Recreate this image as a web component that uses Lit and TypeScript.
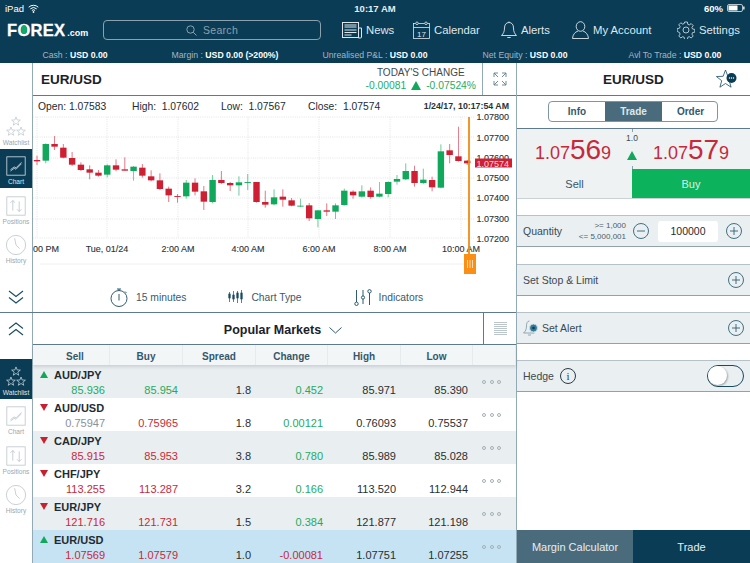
import { LitElement, html, svg, css } from 'lit'
import { customElement } from 'lit/decorators.js'
import { classMap } from 'lit/directives/class-map.js'

// candles as [high, top, bottom, low, up], y measured in 1/3 px from y=110
const CANDLES: [number, number, number, number, number][] = [
  [137, 150, 154, 165, 0], [100, 102, 152, 160, 1], [78, 102, 110, 120, 0], [102, 113, 143, 145, 0],
  [126, 144, 164, 168, 0], [157, 164, 180, 183, 0], [166, 178, 188, 208, 0], [180, 188, 197, 200, 0],
  [163, 166, 194, 202, 1], [148, 166, 179, 184, 0], [142, 178, 182, 182, 0], [168, 170, 183, 212, 1],
  [162, 173, 197, 203, 0], [181, 199, 211, 214, 0], [190, 211, 237, 240, 0], [230, 236, 256, 276, 0],
  [252, 258, 260, 278, 0], [210, 218, 259, 266, 1], [205, 218, 245, 256, 0], [228, 244, 275, 300, 0],
  [195, 210, 276, 280, 1], [183, 210, 219, 222, 0], [216, 219, 226, 243, 0], [199, 217, 226, 257, 1],
  [192, 216, 217, 240, 1], [216, 216, 276, 278, 0], [242, 276, 284, 293, 0], [238, 262, 283, 286, 1],
  [238, 260, 269, 290, 0], [264, 271, 287, 289, 0], [266, 287, 288, 291, 1], [279, 286, 325, 333, 0],
  [300, 301, 327, 352, 1], [280, 301, 305, 318, 0], [280, 286, 305, 327, 1], [236, 242, 285, 287, 1],
  [241, 245, 256, 266, 0], [226, 244, 260, 263, 1], [232, 242, 261, 266, 0], [216, 251, 260, 262, 1],
  [214, 216, 252, 262, 1], [195, 207, 215, 224, 1], [160, 183, 208, 210, 1], [167, 183, 219, 230, 0],
  [176, 209, 219, 222, 1], [200, 210, 232, 244, 0], [103, 124, 233, 235, 1], [102, 121, 135, 160, 0],
  [50, 139, 153, 155, 0], [150, 152, 160, 165, 0],
]

const GRID_Y = [117, 137, 158, 178, 198, 219, 238]
const GRID_X = [37, 107, 178, 248, 319, 390, 461]
const PRICES: [string, number][] = [
  ['1.07800', 120], ['1.07700', 140.5], ['1.07600', 160.5], ['1.07500', 180.5],
  ['1.07400', 201], ['1.07300', 221.5], ['1.07200', 241.5],
]
const TIMES: [string, number][] = [
  ['Tue, 01/24', 107], ['2:00 AM', 178], ['4:00 AM', 248], ['6:00 AM', 319], ['8:00 AM', 390], ['10:00 AM', 461],
]

interface Row {
  pair: string
  up: boolean
  sell: string
  buy: string
  tone: string
  spread: string
  change: string
  high: string
  low: string
}

const ROWS: Row[] = [
  { pair: 'AUD/JPY', up: true, sell: '85.936', buy: '85.954', tone: 'green', spread: '1.8', change: '0.452', high: '85.971', low: '85.390' },
  { pair: 'AUD/USD', up: false, sell: '0.75947', buy: '0.75965', tone: 'mixed', spread: '1.8', change: '0.00121', high: '0.76093', low: '0.75537' },
  { pair: 'CAD/JPY', up: false, sell: '85.915', buy: '85.953', tone: 'red', spread: '3.8', change: '0.780', high: '85.989', low: '85.028' },
  { pair: 'CHF/JPY', up: false, sell: '113.255', buy: '113.287', tone: 'red', spread: '3.2', change: '0.166', high: '113.520', low: '112.944' },
  { pair: 'EUR/JPY', up: false, sell: '121.716', buy: '121.731', tone: 'red', spread: '1.5', change: '0.384', high: '121.877', low: '121.198' },
  { pair: 'EUR/USD', up: true, sell: '1.07569', buy: '1.07579', tone: 'red', spread: '1.0', change: '-0.00081', high: '1.07751', low: '1.07255' },
]

const starPoints = (cx: number, cy: number, r: number) => {
  const pts: string[] = []
  for (let i = 0; i < 10; i++) {
    const rad = i % 2 ? r * 0.42 : r
    const a = (Math.PI / 5) * i - Math.PI / 2
    pts.push(`${(cx + rad * Math.cos(a)).toFixed(2)},${(cy + rad * Math.sin(a)).toFixed(2)}`)
  }
  return pts.join(' ')
}

const icons = {
  stars: html`<svg width="24" height="24" viewBox="0 0 24 24" fill="none" stroke="currentColor" stroke-width=".7">
    <polygon points=${starPoints(12, 6, 5)} /><polygon points=${starPoints(6.5, 17, 5)} /><polygon points=${starPoints(17.5, 17, 5)} />
  </svg>`,
  chart: html`<svg width="24" height="24" viewBox="0 0 24 24" fill="none" stroke="currentColor" stroke-width=".8">
    <rect x="2" y="2" width="20" height="20" /><path d="M6 16l4-3 2 1 6-6M6 17.5l4-3 2 1 6-6" />
  </svg>`,
  positions: html`<svg width="24" height="24" viewBox="0 0 24 24" fill="none" stroke="currentColor" stroke-width=".8">
    <rect x="2" y="2" width="20" height="20" /><path d="M8.5 17V6M6 8.5l2.5-2.5L11 8.5M15.5 7v11M13 15.500l2.500 2.500 2.500-2.500" />
  </svg>`,
  history: html`<svg width="24" height="24" viewBox="0 0 24 24" fill="none" stroke="currentColor" stroke-width=".8">
    <circle cx="12" cy="12" r="10.500" /><path d="M10.500 4.500l1.500 7.500 4 4" />
  </svg>`,
  down: html`<svg width="16" height="16" viewBox="0 0 16 16" fill="none" stroke="#174a63" stroke-width="1.100">
    <path d="M1 2l7 5.500L15 2M1 8.500l7 5.500 7-5.500" />
  </svg>`,
  up: html`<svg width="16" height="16" viewBox="0 0 16 16" fill="none" stroke="#174a63" stroke-width="1.100">
    <path d="M1 7.500L8 2l7 5.500M1 14l7-5.500 7 5.500" />
  </svg>`,
  wifi: html`<svg width="11" height="9" viewBox="0 0 11 9" fill="none" stroke="#fff" stroke-width="1">
    <path d="M.7 3.200a7 7 0 0 1 9.600 0M2.300 4.900a4.700 4.700 0 0 1 6.400 0M3.900 6.500a2.300 2.300 0 0 1 3.200 0" /><circle cx="5.500" cy="8" r=".6" fill="#fff" />
  </svg>`,
  battery: html`<svg width="18" height="8" viewBox="0 0 18 8">
    <rect x=".5" y=".5" width="15" height="7" rx="1.500" fill="none" stroke="#fff" stroke-width=".7" />
    <rect x="1.500" y="1.500" width="9" height="5" fill="#fff" /><rect x="16.200" y="2.500" width="1.300" height="3" fill="#fff" />
  </svg>`,
  search: html`<svg width="11" height="11" viewBox="0 0 11 11" fill="none" stroke="#8ba1ad" stroke-width="1">
    <circle cx="4.500" cy="4.500" r="3.700" /><path d="M7.200 7.200l3.300 3.300" />
  </svg>`,
  news: html`<svg width="20" height="17" viewBox="0 0 20 17" fill="none" stroke="#dfe7eb" stroke-width="1">
    <rect x=".5" y=".5" width="16" height="15" /><path d="M2.500 3h12M2.500 5h12M2.500 8h12M2.500 10.500h12M2.500 13h7M16.500 6h3v9a1 1 0 0 1-1 1h-2" />
  </svg>`,
  calendar: html`<svg width="17" height="18" viewBox="0 0 17 18" fill="none" stroke="#dfe7eb" stroke-width=".8">
    <rect x=".5" y="2.500" width="16" height="15" /><path d="M.5 6.500h16" /><circle cx="4" cy="2.300" r="1.300" fill="#0b3c55" /><circle cx="13" cy="2.300" r="1.300" fill="#0b3c55" />
    <text x="8.500" y="15.500" text-anchor="middle" font-size="8" font-family="Liberation Sans" fill="#dfe7eb" stroke="none">17</text>
  </svg>`,
  bell: html`<svg width="16" height="18" viewBox="0 0 16 18" fill="none" stroke="#dfe7eb" stroke-width=".9">
    <path d="M8 1.500c-3 0-4.500 2.400-4.500 5.500 0 3.500-1 5.500-3 7.500h15c-2-2-3-4-3-7.500 0-3.100-1.500-5.500-4.500-5.500zM6.300 16.500h3.400" />
    <path d="M8 .5v1" />
  </svg>`,
  user: html`<svg width="17" height="18" viewBox="0 0 17 18" fill="none" stroke="#dfe7eb" stroke-width=".9">
    <ellipse cx="8.500" cy="5.500" rx="4.300" ry="4.800" /><path d="M6 10C3 11 .8 13.500 .5 17.500h16C16.200 13.500 14 11 11 10" />
  </svg>`,
  gear: html`<svg width="18" height="18" viewBox="0 0 18 18" fill="none" stroke="#dfe7eb" stroke-width=".8">
    <circle cx="9" cy="9" r="3" />
    <path d="M7.600 1h2.800l.4 2.300 1.500.6 1.900-1.300 2 2-1.300 1.900.6 1.500 2.300.4v2.800l-2.300.4-.6 1.500 1.300 1.900-2 2-1.900-1.300-1.500.6-.4 2.300H7.600l-.4-2.300-1.500-.6-1.900 1.300-2-2 1.300-1.900-.6-1.500L.2 10.400V7.600l2.300-.4.6-1.500-1.300-1.900 2-2 1.900 1.300 1.500-.6z" />
  </svg>`,
  expand: html`<svg width="14" height="14" viewBox="0 0 14 14" fill="none" stroke="#5f7d8e" stroke-width=".9">
    <path d="M1 5V1h4M1 1l4 4M13 5V1H9M13 1L9 5M1 9v4h4M1 13l4-4M13 9v4H9M13 13L9 9" />
  </svg>`,
  watch: html`<svg width="18" height="19" viewBox="0 0 18 19" fill="none" stroke="#174a63" stroke-width=".9">
    <circle cx="9" cy="10.500" r="8" /><path d="M9 6v6.500M7 1h4M9 1v1.500M15 3.500l1.500 1.500" />
  </svg>`,
  bars: html`<svg width="15" height="14" viewBox="0 0 15 14" fill="#174a63" stroke="#174a63" stroke-width=".7">
    <path d="M1.500 2v10M5.500 1v11M9.500 1v12M13.500 0v13" /><rect x=".8" y="4" width="1.400" height="4" /><rect x="4.800" y="5" width="1.400" height="4" /><rect x="8.800" y="3" width="1.400" height="5" /><rect x="12.800" y="3" width="1.400" height="6" />
  </svg>`,
  sliders: html`<svg width="18" height="17" viewBox="0 0 18 17" fill="none" stroke="#174a63" stroke-width=".9">
    <path d="M2.500 1v12M9 1v6M9 10v5M15.500 4v12" /><circle cx="2.500" cy="14.800" r="1.700" /><circle cx="9" cy="8.500" r="1.600" /><circle cx="15.500" cy="2.300" r="1.700" />
  </svg>`,
  caret: html`<svg width="13" height="7" viewBox="0 0 13 7" fill="none" stroke="#174a63" stroke-width=".9"><path d="M.5 .5l6 5.500 6-5.500" /></svg>`,
  list: html`<svg width="13" height="13" viewBox="0 0 13 13" stroke="#a9b6be" stroke-width=".8"><path d="M0 .5h13M0 2.500h13M0 4.500h13M0 6.500h13M0 8.500h13M0 10.500h13M0 12.500h13" /></svg>`,
  favStar: html`<svg width="22" height="22" viewBox="0 0 22 22">
    <polygon points=${starPoints(9.500, 11.500, 9.500)} fill="#fff" stroke="#174a63" stroke-width=".8" />
    <circle cx="15.500" cy="10" r="5" fill="#0b3c55" />
    <circle cx="13.500" cy="10" r=".7" fill="#fff" /><circle cx="15.500" cy="10" r=".7" fill="#fff" /><circle cx="17.500" cy="10" r=".7" fill="#fff" />
  </svg>`,
  alert: html`<svg width="16" height="16" viewBox="0 0 16 16" fill="none" stroke="#7d96a4" stroke-width=".8">
    <path d="M6.500 1C4 1 3.500 3.500 3.500 6c0 3-1 5.500-3 7h11M5 15h3" /><circle cx="10.500" cy="8" r="4" fill="#2f7b99" stroke="#dfe7eb" /><circle cx="10.500" cy="8" r="1.300" fill="#0b3c55" stroke="none" />
  </svg>`,
}

const roundBtn = (sign: string) => html`<svg width="16" height="16" viewBox="0 0 16 16" fill="none" stroke="#2f6177" stroke-width=".9">
  <circle cx="8" cy="8" r="7.500" /><path d=${sign === '+' ? 'M4 8h8M8 4v8' : 'M4 8h8'} />
</svg>`

@customElement('app-root')
export class AppRoot extends LitElement {
  static styles = css`
    :host {
      display: block;
      width: 750px;
      height: 563px;
      overflow: hidden;
      background: #fff;
      font-family: 'Liberation Sans', Arial, sans-serif;
      color: #1d2a33;
    }
    .top {
      height: 63px;
      background: #0b3c55;
      color: #fff;
      display: grid;
      grid-template-rows: 15px 32px 16px;
    }
    .status {
      display: grid;
      grid-template-columns: 1fr auto 1fr;
      align-items: center;
      font-size: 9.500px;
      padding: 1px 5px 0 5px;
    }
    .status div { display: flex; align-items: center; gap: 4px; }
    .status .time { font-weight: 700; color: #e6edf0; }
    .status .batt { justify-content: flex-end; }
    .nav { display: flex; align-items: center; padding: 0 0 2px 7px; }
    .logo {
      width: 96px;
      font-size: 16.500px;
      font-weight: 700;
      letter-spacing: 0.300px;
      white-space: nowrap;
      -webkit-text-stroke: 0.300px #fff;
    }
    .logo small { font-size: 9px; letter-spacing: 0; margin-left: 2px; -webkit-text-stroke: 0; }
    .logo .o { position: relative; }
    .logo .o::after {
      content: '';
      position: absolute;
      left: 3.500px;
      top: 4.500px;
      width: 6px;
      height: 9px;
      border-radius: 50%;
      background: #12a86c;
    }
    .search {
      width: 218px;
      height: 20px;
      box-sizing: border-box;
      border: 1px solid #8ba1ad;
      border-radius: 4px;
      display: flex;
      align-items: center;
      justify-content: center;
      gap: 6px;
      color: #8ba1ad;
      font-size: 10.500px;
      letter-spacing: 0.300px;
    }
    .links {
      margin-left: 21px;
      display: grid;
      grid-template-columns: 71px 88px 71px 105px auto;
      font-size: 11.300px;
      color: #dfe7eb;
    }
    .links div { display: flex; align-items: center; gap: 4px; }
    .account {
      display: grid;
      grid-template-columns: repeat(5, 150px);
      font-size: 8.700px;
      line-height: 16px;
      color: #a3b6c0;
      text-align: center;
      white-space: nowrap;
    }
    .account b { color: #fff; }

    .body { display: grid; grid-template-columns: 516px 234px; height: 500px; }
    .pane { display: flex; height: 250px; box-sizing: border-box; }
    .pane.upper { height: 250px; border-bottom: 1px solid #5d7b8c; }
    .rail {
      width: 33px;
      flex: none;
      box-sizing: border-box;
      border-right: 1px solid #92a9b6;
      display: flex;
      flex-direction: column;
      color: #b4c0c7;
    }
    .rail-item {
      height: 39.500px;
      width: 32px;
      display: flex;
      flex-direction: column;
      align-items: center;
      justify-content: flex-end;
      font-size: 6.600px;
      color: #9aa8b1;
      padding-bottom: 3px;
      box-sizing: border-box;
      gap: 1px;
    }
    .rail-item svg { color: #b4c0c7; width: 22px; height: 22px; }
    .rail-item.on { background: #0b3c55; color: #dfe7eb; }
    .rail-item.on svg { color: #e6edf0; }
    .chev { display: flex; justify-content: center; width: 32px; }
    .rail.upper-rail { padding-top: 46px; }
    .rail.upper-rail .chev { margin-top: 22px; }
    .rail.lower-rail .chev { padding: 8px 0 22px; }
    .main { flex: 1; min-width: 0; display: flex; flex-direction: column; }

    .chart-head {
      height: 33px;
      box-sizing: border-box;
      border-bottom: 1px solid #5d7b8c;
      display: grid;
      grid-template-columns: 1fr auto 34px;
      align-items: center;
    }
    .pair { font-size: 13.500px; font-weight: 700; padding-left: 8px; color: #1a2229; }
    .today { text-align: center; font-size: 10px; color: #3b4a53; line-height: 13px; padding-right: 6px; }
    .today .vals {
      display: flex;
      align-items: center;
      gap: 5px;
      color: #1eab62;
      font-size: 10.300px;
    }
    .tri-up { width: 0; height: 0; border: 5.500px solid transparent; border-top: 0; border-bottom: 9px solid #12a85c; }
    .tri-down { width: 0; height: 0; border: 4px solid transparent; border-bottom: 0; border-top: 7px solid #c8202f; }
    .tri-small { border-width: 0 4px 7px; border-style: solid; border-color: transparent transparent #12a85c; }
    .expand {
      height: 100%;
      border-left: 1px solid #92a9b6;
      display: flex;
      align-items: center;
      justify-content: center;
    }
    .stats {
      height: 16px;
      padding: 5px 7px 0 5px;
      box-sizing: border-box;
      display: grid;
      grid-template-columns: 94px 89px 87px 1fr auto;
      align-items: center;
      font-size: 10.300px;
      line-height: 11px;
      color: #222c33;
      white-space: nowrap;
    }
    .stamp { font-size: 8.800px; font-weight: 700; color: #2b3339; }
    .chart { display: block; height: 163px; width: 483px; }
    .tools {
      height: 37px;
      padding-top: 7px;
      box-sizing: border-box;
      display: flex;
      align-items: center;
      font-size: 10.300px;
      color: #3b5a6c;
    }
    .tools div { display: flex; align-items: center; gap: 8px; }
    .tools div:nth-child(1) { margin-left: 77px; }
    .tools div:nth-child(2) { margin-left: 42px; }
    .tools div:nth-child(3) { margin-left: 52px; gap: 7px; }

    .market-head {
      height: 34px;
      box-sizing: border-box;
      border-bottom: 1px solid #5d7b8c;
      display: grid;
      grid-template-columns: 1fr 33px;
      align-items: center;
    }
    .market-title {
      display: flex;
      align-items: center;
      justify-content: center;
      gap: 8px;
      font-size: 12.500px;
      font-weight: 700;
      color: #1a2229;
      padding: 3px 0 0 50px;
    }
    .market-list {
      height: 100%;
      border-left: 1px solid #5d7b8c;
      display: flex;
      align-items: center;
      justify-content: center;
    }
    .cols { display: grid; grid-template-columns: 77px 73px 73px 72px 73px 72px 43px; }
    .thead {
      height: 21px;
      background: #f3f6f7;
      box-shadow: 0 2px 3px rgba(60, 80, 90, 0.18);
      position: relative;
      font-size: 10px;
      font-weight: 700;
      color: #34586b;
    }
    .thead div {
      display: flex;
      align-items: center;
      justify-content: center;
      padding-top: 2px;
      border-right: 1px solid #e6ebee;
    }
    .thead div:first-child { padding-left: 8px; }
    .row { height: 33px; grid-template-rows: 16px 17px; font-size: 11px; }
    .row:nth-child(odd) { background: #e9eef0; }
    .row.sel { background: #c5e3f2; }
    .row .name {
      grid-column: 1 / 7;
      font-weight: 700;
      display: flex;
      align-items: center;
      gap: 6px;
      padding: 3px 0 0 7px;
      color: #1f2c34;
    }
    .row .name span { width: 8px; display: flex; justify-content: center; }
    .dots {
      grid-column: 7;
      grid-row: 1 / 3;
      display: flex;
      gap: 3.500px;
      align-items: center;
      padding-left: 9px;
    }
    .dots i { width: 4px; height: 4px; box-sizing: border-box; border: 0.800px solid #a4b0b7; border-radius: 50%; }
    .val { text-align: right; padding: 1px 5px 0 0; line-height: 16px; color: #2a2f33; }
    .green { color: #1eab62; }
    .red { color: #c8293a; }
    .grey { color: #8b9298; }

    .side {
      border-left: 1px solid #92a9b6;
      box-sizing: border-box;
      display: flex;
      flex-direction: column;
      height: 500px;
    }
    .side-head {
      height: 33px;
      box-sizing: border-box;
      border-bottom: 1px solid #5d7b8c;
      display: flex;
      align-items: center;
      justify-content: center;
      position: relative;
      font-size: 13.500px;
      font-weight: 700;
      color: #1a2229;
    }
    .side-head svg { position: absolute; right: 12px; top: 5px; }
    .tabs-wrap { height: 33px; box-sizing: border-box; border-bottom: 1px solid #5d7b8c; padding: 5px 0 0 31px; }
    .tabs {
      display: grid;
      grid-template-columns: 56px 57px 57px;
      width: 170px;
      height: 21px;
      box-sizing: border-box;
      border: 1px solid #7d96a4;
      border-radius: 4px;
      overflow: hidden;
      font-size: 10px;
      font-weight: 700;
      color: #34586b;
    }
    .tabs div { display: flex; align-items: center; justify-content: center; }
    .tabs .on { background: #4a6b7c; color: #dfe7eb; }
    .quote {
      height: 40px;
      background: #eef2f3;
      display: grid;
      grid-template-columns: 115px 1fr;
      color: #c8293a;
      position: relative;
    }
    .price {
      display: flex;
      align-items: baseline;
      justify-content: center;
      font-size: 18px;
      line-height: 41px;
    }
    .price:first-child { padding-right: 3px; }
    .price b { font-size: 28px; font-weight: 400; }
    .delta {
      position: absolute;
      left: 109px;
      top: 0;
      width: 12px;
      height: 40px;
      display: flex;
      flex-direction: column;
      align-items: center;
      justify-content: space-between;
      font-size: 8.500px;
      color: #3b4a53;
      padding: 4px 0 9px;
      box-sizing: border-box;
    }
    .delta::before, .delta::after {
      content: '';
      position: absolute;
      left: 5.500px;
      width: 1px;
      height: 3px;
      background: #8fa2ad;
    }
    .delta::before { top: 0; }
    .delta::after { bottom: 0; }
    .sides { height: 30px; display: grid; grid-template-columns: 115px 1fr; border-bottom: 1px solid #c9d2d7; box-sizing: border-box; font-size: 11px; }
    .sides div { display: flex; align-items: center; justify-content: center; }
    .sides .sell { background: #eef2f3; color: #34586b; }
    .sides .buy { background: #0db25c; color: #d9f3e4; }
    .section {
      height: 32px;
      box-sizing: border-box;
      background: #eaeff1;
      border-top: 1px solid #b7c2c8;
      border-bottom: 1px solid #8fa2ad;
      display: flex;
      align-items: center;
      padding: 0 6px;
      margin-top: 16px;
      font-size: 10.500px;
      color: #3a4a53;
    }
    .section.quantity { padding-right: 8px; }
    .section.stop { margin-top: 17px; }
    .section .grow { flex: 1; }
    .limits { flex: 1; text-align: right; font-size: 8px; line-height: 11px; color: #4c5d67; margin-right: 7px; white-space: nowrap; }
    .qty {
      width: 60px;
      height: 21px;
      margin: 0 8px 0 9px;
      background: #fff;
      border-radius: 3px;
      display: flex;
      align-items: center;
      justify-content: center;
      font-size: 10.500px;
      color: #222c33;
    }
    .alert-label { margin-left: 3px; }
    .info {
      width: 16px;
      height: 16px;
      margin-left: 6px;
      box-sizing: border-box;
      border: 1px solid #2a3b45;
      border-radius: 50%;
      display: flex;
      align-items: center;
      justify-content: center;
      font: 11px 'Liberation Serif', serif;
      color: #2a3b45;
    }
    .toggle {
      width: 37px;
      height: 22px;
      box-sizing: border-box;
      border: 1.500px solid #174a63;
      border-radius: 11px;
      background: #eaeff1;
      position: relative;
    }
    .toggle::after {
      content: '';
      position: absolute;
      left: 0;
      top: 0;
      width: 19px;
      height: 19px;
      border-radius: 50%;
      background: #fff;
      box-shadow: 1px 1px 2px rgba(0, 0, 0, 0.3);
    }
    .foot { margin-top: auto; height: 33px; display: grid; grid-template-columns: 116px 1fr; font-size: 11px; color: #e6edf0; }
    .foot div { display: flex; align-items: center; justify-content: center; }
    .foot .calc { background: #4a6b7c; }
    .foot .trade { background: #0b3c55; }
  `

  private railItem(label: string, icon: unknown, on = false) {
    return html`<div class=${classMap({ 'rail-item': true, on })}>${icon}<span>${label}</span></div>`
  }

  private rail(active: string) {
    return html`
      ${this.railItem('Watchlist', icons.stars, active === 'Watchlist')}
      ${this.railItem('Chart', icons.chart, active === 'Chart')}
      ${this.railItem('Positions', icons.positions, active === 'Positions')}
      ${this.railItem('History', icons.history, active === 'History')}
    `
  }

  private chart() {
    const y = (v: number) => 110 + v / 3
    return html`<svg class="chart" viewBox="33 112 483 163" font-family="Liberation Sans" font-size="9">
      ${GRID_Y.map((g) => svg`<line x1="33" x2="475" y1=${g} y2=${g} stroke="#d5d9dc" stroke-width=".7" stroke-dasharray="1 1.200" />`)}
      ${GRID_X.map((g) => svg`<line x1=${g} x2=${g} y1="117" y2="238" stroke="#d5d9dc" stroke-width=".7" stroke-dasharray="1 1.200" />`)}
      <line x1="40" x2="475" y1="264" y2="264" stroke="#eef0f1" />
      ${CANDLES.map(([hi, top, bot, lo, up], i) => {
        const x = 37 + i * 8.78
        const color = up ? '#10a85a' : '#cf1f33'
        return svg`
          <line x1=${x} x2=${x} y1=${y(hi)} y2=${y(lo)} stroke=${color} stroke-width=".8" opacity=".75" />
          <rect x=${x - 3.2} y=${y(top)} width="6.400" height=${Math.max((bot - top) / 3, 0.9)} fill=${color} />`
      })}
      ${PRICES.map(([t, py]) => svg`<text x="476.500" y=${py} fill="#2b3339" stroke="#2b3339" stroke-width=".12">${t}</text>`)}
      <rect x="475" y="158.500" width="37" height="9" fill="#cf1f33" />
      <text x="476.500" y="166.500" fill="#f4d9dc">1.07574</text>
      <text x="33" y="251.500" fill="#2b3339" stroke="#2b3339" stroke-width=".12">00 PM</text>
      ${TIMES.map(([t, tx]) => svg`<text x=${tx} y="251.500" text-anchor="middle" fill="#2b3339" stroke="#2b3339" stroke-width=".12">${t}</text>`)}
      <line x1="469" x2="469" y1="117" y2="255" stroke="#f08c12" stroke-width="1.800" />
      <rect x="464" y="254" width="12" height="20" fill="#fb8f16" />
      <path d="M467.500 260v8M470 260v8M472.500 260v8" stroke="#fde2bf" stroke-width=".9" />
    </svg>`
  }

  private row(r: Row, i: number) {
    const sellTone = r.tone === 'mixed' ? 'grey' : r.tone
    const buyTone = r.tone === 'mixed' ? 'red' : r.tone
    const changeTone = r.change.startsWith('-') ? 'red' : 'green'
    return html`<div class=${classMap({ row: true, cols: true, sel: i === 5 })}>
      <div class="name"><span><i class=${r.up ? 'tri-small' : 'tri-down'}></i></span>${r.pair}</div>
      <div class="dots"><i></i><i></i><i></i></div>
      <div class="val ${sellTone}">${r.sell}</div>
      <div class="val ${buyTone}">${r.buy}</div>
      <div class="val">${r.spread}</div>
      <div class="val ${changeTone}">${r.change}</div>
      <div class="val">${r.high}</div>
      <div class="val">${r.low}</div>
    </div>`
  }

  render() {
    return html`
      <div class="top">
        <div class="status">
          <div>iPad ${icons.wifi}</div>
          <div class="time">10:17 AM</div>
          <div class="batt"><b>60%</b> ${icons.battery}</div>
        </div>
        <div class="nav">
          <div class="logo">F<span class="o">O</span>REX<small>.com</small></div>
          <div class="search">${icons.search}<span>Search</span></div>
          <div class="links">
            <div>${icons.news}News</div>
            <div>${icons.calendar}Calendar</div>
            <div>${icons.bell}Alerts</div>
            <div>${icons.user}My Account</div>
            <div>${icons.gear}Settings</div>
          </div>
        </div>
        <div class="account">
          <div>Cash : <b>USD 0.00</b></div>
          <div>Margin : <b>USD 0.00 (&gt;200%)</b></div>
          <div>Unrealised P&amp;L : <b>USD 0.00</b></div>
          <div>Net Equity : <b>USD 0.00</b></div>
          <div>Avl To Trade : <b>USD 0.00</b></div>
        </div>
      </div>

      <div class="body">
        <div>
          <div class="pane upper">
            <div class="rail upper-rail">
              ${this.rail('Chart')}
              <div class="chev">${icons.down}</div>
            </div>
            <div class="main">
              <div class="chart-head">
                <div class="pair">EUR/USD</div>
                <div class="today">
                  TODAY'S CHANGE
                  <div class="vals"><span>-0.00081</span><i class="tri-up"></i><span>-0.07524%</span></div>
                </div>
                <div class="expand">${icons.expand}</div>
              </div>
              <div class="stats">
                <div>Open: 1.07583</div>
                <div>High:&nbsp; 1.07602</div>
                <div>Low:&nbsp; 1.07567</div>
                <div>Close:&nbsp; 1.07574</div>
                <div class="stamp">1/24/17, 10:17:54 AM</div>
              </div>
              ${this.chart()}
              <div class="tools">
                <div>${icons.watch}15 minutes</div>
                <div>${icons.bars}Chart Type</div>
                <div>${icons.sliders}Indicators</div>
              </div>
            </div>
          </div>
          <div class="pane">
            <div class="rail lower-rail">
              <div class="chev">${icons.up}</div>
              ${this.rail('Watchlist')}
            </div>
            <div class="main">
              <div class="market-head">
                <div class="market-title">Popular Markets ${icons.caret}</div>
                <div class="market-list">${icons.list}</div>
              </div>
              <div class="thead cols">
                <div>Sell</div><div>Buy</div><div>Spread</div><div>Change</div><div>High</div><div>Low</div><div></div>
              </div>
              <div>${ROWS.map((r, i) => this.row(r, i))}</div>
            </div>
          </div>
        </div>

        <div class="side">
          <div class="side-head">EUR/USD ${icons.favStar}</div>
          <div class="tabs-wrap">
            <div class="tabs"><div>Info</div><div class="on">Trade</div><div>Order</div></div>
          </div>
          <div class="quote">
            <div class="price">1.07<b>56</b>9</div>
            <div class="price">1.07<b>57</b>9</div>
            <div class="delta"><span>1.0</span><i class="tri-up"></i></div>
          </div>
          <div class="sides"><div class="sell">Sell</div><div class="buy">Buy</div></div>
          <div class="section quantity">
            <span>Quantity</span>
            <div class="limits">&gt;= 1,000<br />&lt;= 5,000,001</div>
            ${roundBtn('-')}
            <div class="qty">100000</div>
            ${roundBtn('+')}
          </div>
          <div class="section stop"><span class="grow">Set Stop &amp; Limit</span>${roundBtn('+')}</div>
          <div class="section">${icons.alert}<span class="grow alert-label">Set Alert</span>${roundBtn('+')}</div>
          <div class="section"><span>Hedge</span><div class="info">i</div><span class="grow"></span><div class="toggle"></div></div>
          <div class="foot"><div class="calc">Margin Calculator</div><div class="trade">Trade</div></div>
        </div>
      </div>
    `
  }
}
